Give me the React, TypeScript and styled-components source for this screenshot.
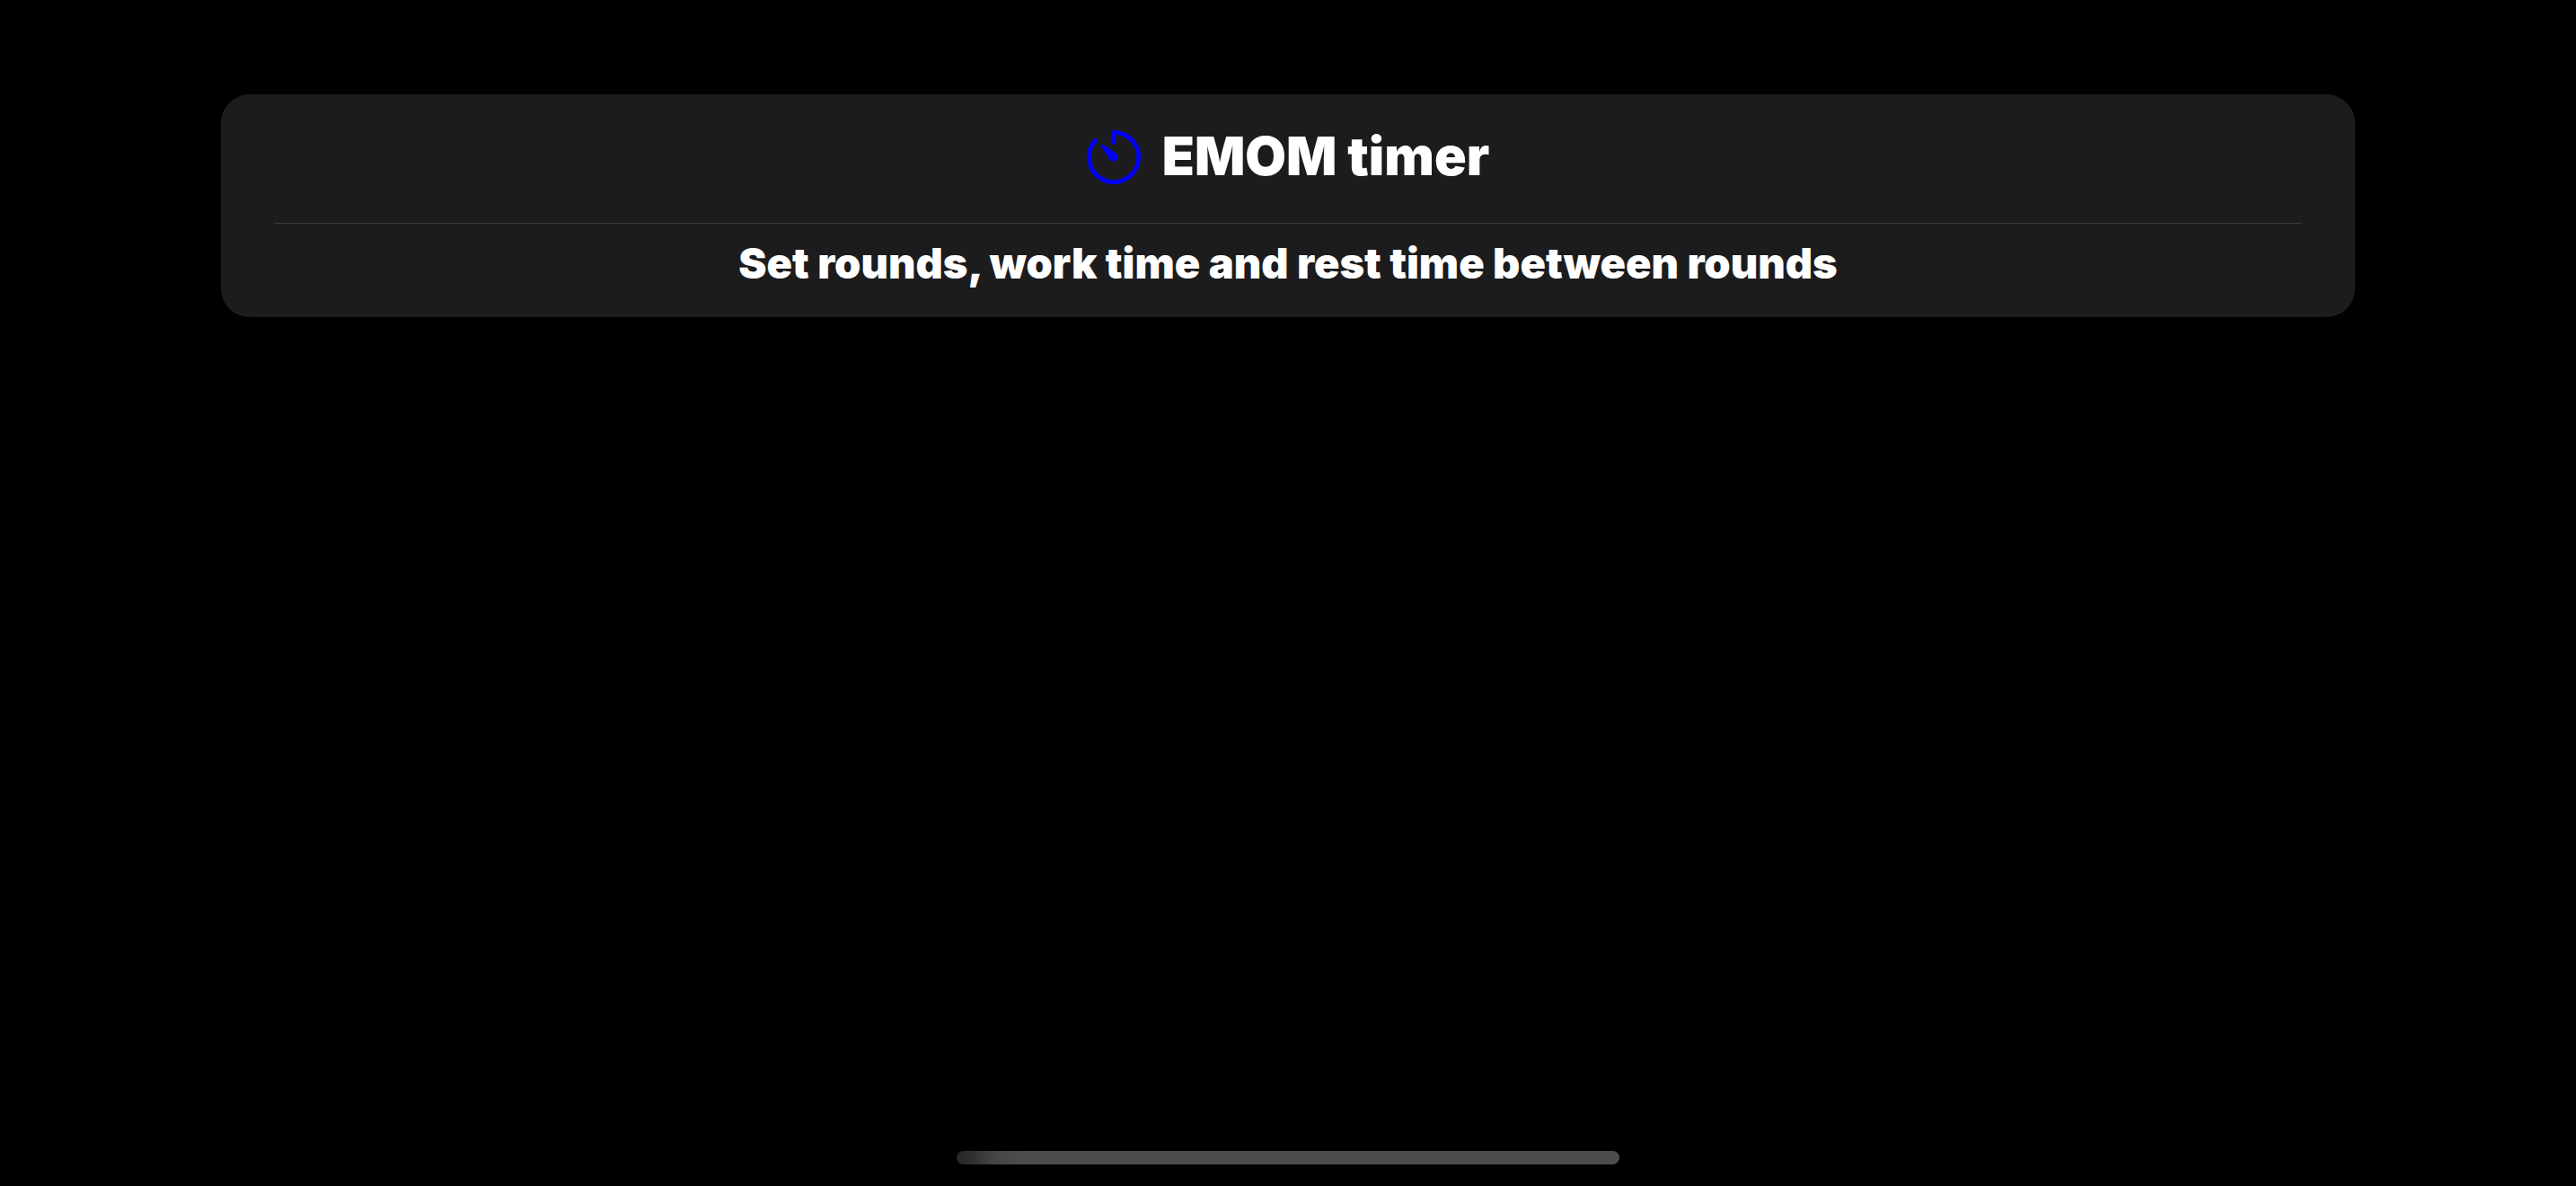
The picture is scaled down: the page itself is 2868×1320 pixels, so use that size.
import React from "react";
import styled, { createGlobalStyle } from "styled-components";

const GlobalStyle = createGlobalStyle`
  body {
    margin: 0;
    background: #000000;
    color: #ffffff;
    font-family: Inter, "Liberation Sans", sans-serif;
  }
`;

const Screen = styled.main`
  box-sizing: border-box;
  display: flex;
  flex-direction: column;
  align-items: center;
  justify-content: space-between;
  min-height: 100vh;
  padding: 105px 246px 24px;
`;

const Card = styled.section`
  align-self: stretch;
  padding: 0 60px;
  border-radius: 32px;
  background: #1c1c1e;
`;

const Row = styled.div<{ $height: number; $divided?: boolean }>`
  box-sizing: border-box;
  display: flex;
  align-items: center;
  justify-content: center;
  gap: 24px;
  min-height: ${({ $height }) => $height}px;
  padding-bottom: 4px;
  border-bottom: ${({ $divided }) => ($divided ? "1px solid #3d3d41" : "none")};
`;

const Title = styled.h1`
  margin: 0;
  padding-bottom: 2px;
  font-size: 59px;
  line-height: 72px;
  font-weight: 900;
`;

const Subtitle = styled.p`
  margin: 0;
  padding-bottom: 12px;
  font-size: 47px;
  line-height: 60px;
  font-weight: 900;
`;

const Icon = styled.svg`
  flex: none;
  width: 60px;
  height: 60px;
  color: #0000ff;
`;

const HomeIndicator = styled.div`
  width: 738px;
  max-width: 100%;
  height: 15px;
  border-radius: 8px;
  background: linear-gradient(to right, #262626 0, #2f2f2f 16px, #464646 42px, #4d4d4d 76px);
`;

function TimerIcon() {
  return (
    <Icon viewBox="0 0 60 60" fill="none" aria-hidden="true">
      <path
        d="M30 13.2V2.4A27.6 27.6 0 1 1 9.7 11.3"
        stroke="currentColor"
        strokeWidth="4.8"
        strokeLinecap="round"
        strokeLinejoin="round"
      />
      <path
        d="M16.6 16.2C17.2 15.6 18 15.8 18.7 16.3L33 25.9A5 5 0 1 1 26 33L16.5 18.5C16 17.7 16 16.8 16.6 16.2Z"
        fill="currentColor"
      />
    </Icon>
  );
}

export default function App() {
  return (
    <>
      <GlobalStyle />
      <Screen>
        <Card>
          <Row $height={144} $divided>
            <TimerIcon />
            <Title>EMOM timer</Title>
          </Row>
          <Row $height={104}>
            <Subtitle>Set rounds, work time and rest time between rounds</Subtitle>
          </Row>
        </Card>
        <HomeIndicator />
      </Screen>
    </>
  );
}
